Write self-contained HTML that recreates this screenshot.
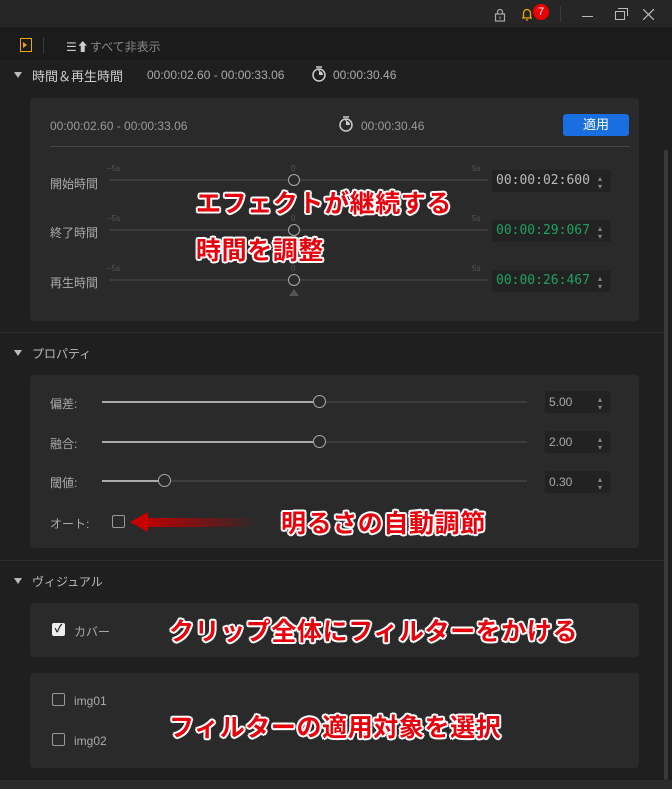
<!DOCTYPE html><html><head><meta charset="utf-8"><style>
*{margin:0;padding:0;box-sizing:border-box}
body{width:672px;height:789px;background:#1f1f1f;font-family:"Liberation Sans","Noto Sans CJK JP",sans-serif;color:#bbb;position:relative;overflow:hidden;font-size:12px}
.a{position:absolute}
.card{position:absolute;background:#2a2a2a;border-radius:4px}
.red{position:absolute;color:#e8000b;font-weight:bold;font-size:25px;letter-spacing:0.6px;line-height:36px;font-family:"Noto Sans CJK JP",sans-serif;white-space:nowrap;text-shadow:-2px 0 #fff,2px 0 #fff,0 -2px #fff,0 2px #fff,-1.5px -1.5px #fff,1.5px 1.5px #fff,-1.5px 1.5px #fff,1.5px -1.5px #fff}
.track{position:absolute;height:2px;background:#3d3d3d}
.knob{position:absolute;width:12px;height:12px;border:1.5px solid #aaa;border-radius:50%;background:#2a2a2a}
.lbl{position:absolute;font-size:12px;color:#aaa}
.box{position:absolute;background:#222;border-radius:3px;font-family:"DejaVu Sans Mono","Liberation Mono",monospace;font-size:13px;padding-left:4px;line-height:22px}
.sp{position:absolute;font-size:8px;color:#888;line-height:8px}
.small{position:absolute;font-size:8px;color:#555}
.cb{position:absolute;width:13px;height:13px;border:1px solid #999;border-radius:2px}
.tri{position:absolute;width:0;height:0;border-left:4px solid transparent;border-right:4px solid transparent;border-top:6px solid #bbb}
</style></head><body>
<div class="a" style="left:0;top:0;width:672px;height:27px;background:#262626"></div>
<div class="a" style="left:0;top:27px;width:672px;height:33px;background:#1b1b1b"></div>
<svg class="a" style="left:494px;top:8px" width="12" height="14"><rect x="1.5" y="6" width="9" height="7" fill="none" stroke="#aaa" stroke-width="1.2"/><path d="M3.5 6V4a2.5 2.5 0 0 1 5 0v2" fill="none" stroke="#aaa" stroke-width="1.2"/><line x1="6" y1="8.5" x2="6" y2="11" stroke="#aaa"/></svg>
<svg class="a" style="left:519px;top:6px" width="16" height="16"><path d="M3 12h10M4.5 12V7a3.5 3.5 0 0 1 7 0v5M7 14h2" fill="none" stroke="#f0a800" stroke-width="1.3"/></svg>
<div class="a" style="left:533px;top:4px;width:16px;height:16px;border-radius:50%;background:#e00;color:#fff;font-size:11px;text-align:center;line-height:16px">7</div>
<div class="a" style="left:560px;top:6px;width:1px;height:16px;background:#3a3a3a"></div>
<div class="a" style="left:582px;top:16px;width:11px;height:1px;background:#bbb"></div>
<div class="a" style="left:615px;top:11px;width:10px;height:9px;border:1.3px solid #bbb"></div>
<div class="a" style="left:618px;top:8px;width:10px;height:8px;border-top:1.3px solid #bbb;border-right:1.3px solid #bbb"></div>
<svg class="a" style="left:643px;top:9px" width="11" height="11"><path d="M0 0L11 11M11 0L0 11" stroke="#bbb" stroke-width="1.2"/></svg>
<div class="a" style="left:20px;top:38px;width:12px;height:14px;border:1.5px solid #f0a800"></div>
<div class="a" style="left:23px;top:42px;border-top:3px solid transparent;border-bottom:3px solid transparent;border-left:4px solid #f0a800;width:0;height:0"></div>
<div class="a" style="left:43px;top:37px;width:1px;height:16px;background:#3a3a3a"></div>
<div class="a" style="left:66px;top:38px;font-size:12px;color:#ccc">☰⬆</div>
<div class="a" style="left:90px;top:38px;font-size:12px;color:#888">すべて非表示</div>
<div class="tri" style="left:14px;top:72px"></div>
<div class="a" style="left:32px;top:66px;font-size:13px;color:#ccc">時間＆再生時間</div>
<div class="a" style="left:147px;top:68px;font-size:12px;color:#aaa">00:00:02.60 - 00:00:33.06</div>
<svg class="a" style="left:311px;top:65px" width="16" height="18"><circle cx="8" cy="10" r="6" fill="none" stroke="#ccc" stroke-width="1.5"/><path d="M5 2h6M8 4v2" stroke="#ccc" stroke-width="1.5"/><path d="M8 10V6a4 4 0 0 1 4 4z" fill="#ccc"/></svg>
<div class="a" style="left:333px;top:68px;font-size:12px;color:#aaa">00:00:30.46</div>
<div class="card" style="left:30px;top:98px;width:609px;height:223px"></div>
<div class="a" style="left:50px;top:119px;font-size:12px;color:#999">00:00:02.60 - 00:00:33.06</div>
<svg class="a" style="left:338px;top:115px" width="16" height="18"><circle cx="8" cy="10" r="6" fill="none" stroke="#ccc" stroke-width="1.5"/><path d="M5 2h6M8 4v2" stroke="#ccc" stroke-width="1.5"/><path d="M8 10V6a4 4 0 0 1 4 4z" fill="#ccc"/></svg>
<div class="a" style="left:361px;top:119px;font-size:12px;color:#999">00:00:30.46</div>
<div class="a" style="left:563px;top:114px;width:66px;height:22px;background:#1a6fe0;border-radius:3px;color:#fff;font-size:13px;text-align:center;line-height:22px">適用</div>
<div class="a" style="left:50px;top:146px;width:580px;height:1px;background:#444"></div>
<div class="lbl" style="left:50px;top:175px">開始時間</div>
<div class="lbl" style="left:50px;top:224px">終了時間</div>
<div class="lbl" style="left:50px;top:274px">再生時間</div>
<div class="track" style="left:110px;top:179px;width:378px"></div>
<div class="track" style="left:110px;top:229px;width:378px"></div>
<div class="track" style="left:110px;top:279px;width:378px"></div>
<div class="small" style="left:107px;top:164px">−5s</div><div class="small" style="left:291px;top:164px">0</div><div class="small" style="left:472px;top:164px">5s</div>
<div class="small" style="left:107px;top:214px">−5s</div><div class="small" style="left:291px;top:214px">0</div><div class="small" style="left:472px;top:214px">5s</div>
<div class="small" style="left:107px;top:264px">−5s</div><div class="small" style="left:291px;top:264px">0</div><div class="small" style="left:472px;top:264px">5s</div>
<div class="knob" style="left:288px;top:174px"></div>
<div class="knob" style="left:288px;top:224px"></div>
<div class="knob" style="left:288px;top:274px"></div>
<div class="a" style="left:289px;top:289px;border-left:5px solid transparent;border-right:5px solid transparent;border-bottom:7px solid #555;width:0;height:0"></div>
<div class="box" style="left:492px;top:170px;width:119px;color:#bbb">00:00:02:600</div>
<div class="box" style="left:492px;top:220px;width:119px;color:#1fa060">00:00:29:067</div>
<div class="box" style="left:492px;top:270px;width:119px;color:#1fa060">00:00:26:467</div>
<div class="sp" style="left:598px;top:175px">▴<br>▾</div>
<div class="sp" style="left:598px;top:225px">▴<br>▾</div>
<div class="sp" style="left:598px;top:275px">▴<br>▾</div>
<div class="red" style="left:196px;top:184px">エフェクトが継続する</div>
<div class="red" style="left:196px;top:231px">時間を調整</div>
<div class="a" style="left:0;top:332px;width:664px;height:1px;background:#2e2e2e"></div>
<div class="tri" style="left:14px;top:350px"></div>
<div class="a" style="left:32px;top:345px;font-size:12px;color:#bbb">プロパティ</div>
<div class="card" style="left:30px;top:375px;width:609px;height:173px"></div>
<div class="lbl" style="left:50px;top:395px">偏差:</div>
<div class="lbl" style="left:50px;top:435px">融合:</div>
<div class="lbl" style="left:50px;top:474px">閾値:</div>
<div class="track" style="left:102px;top:401px;width:425px"></div>
<div class="track" style="left:102px;top:441px;width:425px"></div>
<div class="track" style="left:102px;top:480px;width:425px"></div>
<div class="a" style="left:102px;top:401px;width:212px;height:2px;background:#aaa"></div>
<div class="a" style="left:102px;top:441px;width:212px;height:2px;background:#aaa"></div>
<div class="a" style="left:102px;top:480px;width:58px;height:2px;background:#aaa"></div>
<div class="knob" style="left:313px;top:395px;width:13px;height:13px"></div>
<div class="knob" style="left:313px;top:435px;width:13px;height:13px"></div>
<div class="knob" style="left:158px;top:474px;width:13px;height:13px"></div>
<div class="box" style="left:545px;top:391px;width:66px;font-family:'Liberation Sans',sans-serif;font-size:12px;color:#aaa">5.00</div>
<div class="box" style="left:545px;top:431px;width:66px;font-family:'Liberation Sans',sans-serif;font-size:12px;color:#aaa">2.00</div>
<div class="box" style="left:545px;top:471px;width:66px;font-family:'Liberation Sans',sans-serif;font-size:12px;color:#aaa">0.30</div>
<div class="sp" style="left:598px;top:396px">▴<br>▾</div>
<div class="sp" style="left:598px;top:436px">▴<br>▾</div>
<div class="sp" style="left:598px;top:476px">▴<br>▾</div>
<div class="lbl" style="left:50px;top:515px">オート:</div>
<div class="cb" style="left:112px;top:515px"></div>
<div class="a" style="left:142px;top:518px;width:116px;height:9px;background:linear-gradient(to right,#c00000,rgba(160,0,0,0))"></div>
<div class="a" style="left:130px;top:512px;border-top:10px solid transparent;border-bottom:10px solid transparent;border-right:18px solid #c80000;width:0;height:0"></div>
<div class="red" style="left:281px;top:504px">明るさの自動調節</div>
<div class="a" style="left:0;top:560px;width:664px;height:1px;background:#2e2e2e"></div>
<div class="tri" style="left:14px;top:578px"></div>
<div class="a" style="left:32px;top:573px;font-size:12px;color:#bbb">ヴィジュアル</div>
<div class="card" style="left:30px;top:603px;width:609px;height:54px"></div>
<div class="a" style="left:52px;top:623px;width:13px;height:13px;background:#eee;border-radius:2px;color:#222;font-size:11px;line-height:13px;text-align:center;font-weight:bold">✓</div>
<div class="lbl" style="left:74px;top:623px">カバー</div>
<div class="red" style="left:169px;top:612px">クリップ全体にフィルターをかける</div>
<div class="card" style="left:30px;top:673px;width:609px;height:95px"></div>
<div class="cb" style="left:52px;top:693px"></div>
<div class="lbl" style="left:74px;top:694px">img01</div>
<div class="cb" style="left:52px;top:733px"></div>
<div class="lbl" style="left:74px;top:734px">img02</div>
<div class="red" style="left:169px;top:708px">フィルターの適用対象を選択</div>
<div class="a" style="left:664px;top:150px;width:4px;height:630px;background:#3a3a3a;border-radius:2px"></div>
<div class="a" style="left:0;top:780px;width:672px;height:9px;background:#2b2b2b"></div>
</body></html>
